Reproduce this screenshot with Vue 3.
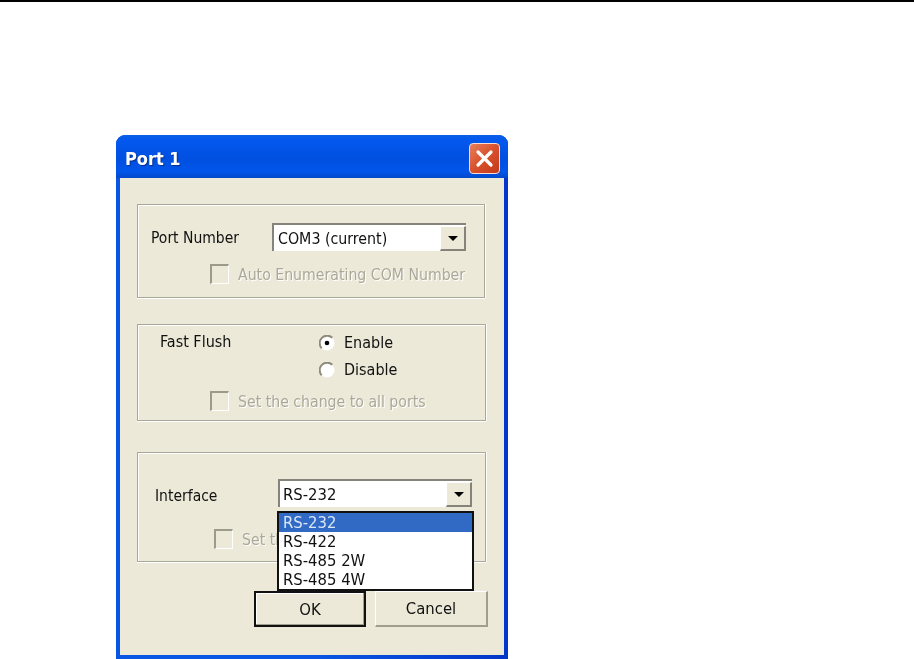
<script setup>
import { ref } from "vue";

const interfaces = ref(["RS-232", "RS-422", "RS-485 2W", "RS-485 4W"]);
const selected = ref("RS-232");
</script>

<template>
  <div class="page">
    <div class="rule"></div>
    <div class="window">
      <div class="titlebar">
        <span class="title">Port 1</span>
        <div class="close">
          <svg width="21" height="21" viewBox="0 0 21 21">
            <path d="M4 4 L17 17 M17 4 L4 17" stroke="#fff" stroke-width="3.2" stroke-linecap="round" fill="none" />
          </svg>
        </div>
      </div>
      <div class="client">
        <div class="group group-port">
          <div class="row">
            <span class="label label-port">Port Number</span>
            <div class="combo">
              <span class="combo-text">COM3 (current)</span>
              <div class="arrow-btn"><i class="arrow"></i></div>
            </div>
          </div>
          <div class="check-row check-port">
            <i class="check"></i>
            <span class="disabled-text">Auto Enumerating COM Number</span>
          </div>
        </div>

        <div class="group group-flush">
          <div class="flush-row">
            <span class="label label-flush">Fast Flush</span>
            <div class="radios">
              <div class="radio-row">
                <svg class="radio" width="16" height="16" viewBox="0 0 16 16">
                  <circle cx="8" cy="8" r="7.5" fill="#fff" />
                  <path d="M2.7 13.3 A7.5 7.5 0 0 1 13.3 2.7" stroke="#8f8c7c" stroke-width="2" fill="none" />
                  <circle cx="8" cy="8" r="2.3" fill="#000" />
                </svg>
                <span class="label">Enable</span>
              </div>
              <div class="radio-row">
                <svg class="radio" width="16" height="16" viewBox="0 0 16 16">
                  <circle cx="8" cy="8" r="7.5" fill="#fff" />
                  <path d="M2.7 13.3 A7.5 7.5 0 0 1 13.3 2.7" stroke="#8f8c7c" stroke-width="2" fill="none" />
                </svg>
                <span class="label">Disable</span>
              </div>
            </div>
          </div>
          <div class="check-row check-flush">
            <i class="check"></i>
            <span class="disabled-text">Set the change to all ports</span>
          </div>
        </div>

        <div class="group group-iface">
          <div class="row">
            <span class="label label-iface">Interface</span>
            <div class="combo combo-iface">
              <span class="combo-text">RS-232</span>
              <div class="arrow-btn"><i class="arrow"></i></div>
              <ul class="dropdown">
                <li v-for="item in interfaces" :key="item" :class="{ active: item === selected }">{{ item }}</li>
              </ul>
            </div>
          </div>
          <div class="check-row check-iface">
            <i class="check"></i>
            <span class="disabled-text">Set the change to all ports</span>
          </div>
        </div>

        <div class="buttons">
          <button class="btn btn-default">OK</button>
          <button class="btn">Cancel</button>
        </div>
      </div>
    </div>
  </div>
</template>

<style>
html,
body {
  background: #fff;
  overflow: hidden;
}
</style>

<style scoped>
.page {
  width: 914px;
  height: 659px;
  overflow: hidden;
  background: #fff;
  font-family: "DejaVu Sans Condensed", "Liberation Sans", Arial, sans-serif;
}

.rule {
  height: 2px;
  background: #000;
}

.window {
  box-sizing: border-box;
  width: 392px;
  height: 524px;
  margin: 133px 0 0 116px;
  display: flex;
  flex-direction: column;
  border-radius: 9px 9px 0 0;
  background: linear-gradient(90deg, #0a56e4 0%, #0a56e4 50%, #0436c8 100%);
  padding: 0 4px 4px;
  filter: blur(0.4px);
}

.titlebar {
  flex: none;
  height: 43px;
  display: flex;
  align-items: center;
  justify-content: space-between;
  margin: 0 -4px;
  padding: 3px 8px 0 9px;
  box-sizing: border-box;
  border-radius: 9px 9px 0 0;
  background: linear-gradient(180deg, #0a5fe6 0%, #0358ee 12%, #0150e0 55%, #0156ea 85%, #0248c8 100%);
}

.title {
  color: #fff;
  font-weight: 700;
  font-size: 18px;
  text-shadow: 1px 1px 1px #0a2f8c;
}

.close {
  box-sizing: border-box;
  width: 31px;
  height: 31px;
  display: flex;
  align-items: center;
  justify-content: center;
  border: 1px solid #f3ddd5;
  border-radius: 4px;
  background: linear-gradient(135deg, #e8805c 0%, #d8502c 50%, #c23a18 100%);
}

.client {
  flex: 1;
  display: flex;
  flex-direction: column;
  background: #ece9d8;
  padding: 26px 16px 0 17px;
  box-sizing: border-box;
}

.group {
  box-sizing: border-box;
  border: 1px solid #a9a797;
  box-shadow: 0 1px 0 #fff, 1px 0 0 #fff, inset 1px 1px 0 #fff;
}

.group-port {
  width: 348px;
  height: 94px;
  padding: 18px 0 0 13px;
}

.group-flush {
  width: 349px;
  height: 97px;
  margin-top: 26px;
  padding: 7px 0 0 22px;
}

.group-iface {
  width: 349px;
  height: 110px;
  margin-top: 31px;
  padding: 26px 0 0 17px;
}

.row {
  display: flex;
  align-items: center;
}

.label {
  font-size: 16px;
  color: #111;
}

.label-port {
  width: 121px;
  font-size: 15.5px;
  padding-top: 2px;
}

.label-iface {
  width: 123px;
  font-size: 15.5px;
  padding-top: 6px;
}

.combo {
  position: relative;
  box-sizing: border-box;
  width: 194px;
  height: 28px;
  display: flex;
  align-items: center;
  justify-content: space-between;
  background: #fff;
  border-style: solid;
  border-width: 2px 0 0 2px;
  border-color: #85837a;
  padding-left: 4px;
}

.combo-text {
  font-size: 15.8px;
  color: #111;
}

.combo-iface {
  padding-left: 3px;
}

.combo-iface .combo-text {
  font-size: 16.5px;
}

.arrow-btn {
  box-sizing: border-box;
  align-self: flex-end;
  width: 26px;
  height: 25px;
  display: flex;
  align-items: center;
  justify-content: center;
  background: #ece9d8;
  border-style: solid;
  border-width: 1px 2px 2px 1px;
  border-color: #fff #85837a #85837a #fff;
}

.arrow {
  width: 0;
  height: 0;
  border-style: solid;
  border-width: 5px 5px 0;
  border-color: #000 transparent transparent;
}

.dropdown {
  position: absolute;
  top: 30px;
  left: -3px;
  box-sizing: border-box;
  width: 197px;
  height: 80px;
  margin: 0;
  padding: 0;
  list-style: none;
  background: #fff;
  border: 2px solid #111;
  z-index: 2;
}

.dropdown li {
  height: 19px;
  line-height: 19px;
  padding-left: 4px;
  font-size: 16.5px;
  color: #111;
}

.dropdown li.active {
  background: #316ac5;
  color: #dbe6f5;
}

.check-row {
  display: flex;
  align-items: center;
}

.check {
  box-sizing: border-box;
  flex: none;
  width: 19px;
  height: 20px;
  background: #ece9d8;
  border-style: solid;
  border-width: 2px 1px 1px 2px;
  border-color: #9c9a8a #fff #fff #9c9a8a;
}

.disabled-text {
  margin-left: 9px;
  font-size: 15.7px;
  color: #aca899;
  text-shadow: 1px 1px 0 #fff;
}

.check-port {
  margin: 13px 0 0 59px;
}

.check-flush {
  margin: 12px 0 0 50px;
}

.check-iface {
  margin: 22px 0 0 59px;
}

.flush-row {
  display: flex;
  align-items: flex-start;
}

.label-flush {
  width: 159px;
}

.radios {
  display: flex;
  flex-direction: column;
  gap: 8px;
  padding-top: 1px;
}

.radio-row {
  display: flex;
  align-items: center;
  gap: 9px;
}

.radio {
  flex: none;
}

.buttons {
  display: flex;
  justify-content: flex-end;
  gap: 9px;
  margin-top: 29px;
}

.btn {
  box-sizing: border-box;
  width: 113px;
  height: 36px;
  padding: 0;
  font-family: inherit;
  font-size: 16.5px;
  color: #111;
  background: #ece9d8;
  border-style: solid;
  border-width: 1px 2px 2px 1px;
  border-color: #fff #a09e8e #a09e8e #fff;
}

.btn-default {
  width: 112px;
  border: 2px solid #111;
  box-shadow: inset -1px -1px 0 #a09e8e, inset 1px 1px 0 #fff;
}
</style>
